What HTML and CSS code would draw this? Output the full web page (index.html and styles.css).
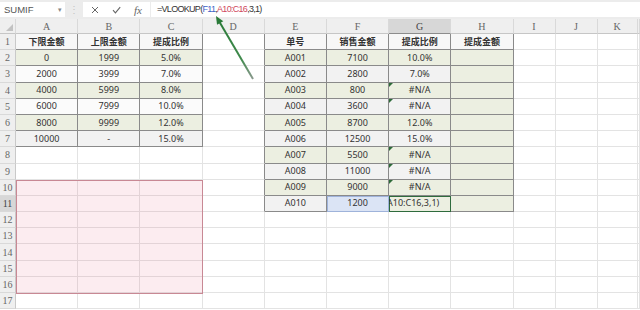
FILE: index.html
```html
<!DOCTYPE html>
<html>
<head>
    <title>VLOOKUP 提成比例</title>
    <link rel="stylesheet" href="styles.css">
</head>
<body>
    <div class="formula-bar">
        <div class="name-box">SUMIF<span class="caret">▾</span></div>
        <div class="grip">⋮</div>
        <div class="buttons">
            <svg width="8" height="8" viewBox="0 0 8 8"><path d="M1 1L7 7M7 1L1 7" stroke="#666" stroke-width="1" fill="none"/></svg>
            <svg width="9" height="8" viewBox="0 0 9 8"><path d="M1 4.2L3.4 6.8L8.2 1.2" stroke="#666" stroke-width="1.1" fill="none"/></svg>
            <span class="fx">fx</span>
        </div>
        <div class="formula">=VLOOKUP(<span class="ref-blue">F11</span>,<span class="ref-red">A10:C16</span>,3,1)</div>
    </div>

    <div class="sheet-wrap">
        <table class="sheet">
            <colgroup>
                <col class="c-rh">
                <col class="c-w"><col class="c-w"><col class="c-w"><col class="c-w">
                <col class="c-w"><col class="c-w"><col class="c-w"><col class="c-w">
                <col class="c-n"><col class="c-n"><col class="c-k"><col class="c-l">
            </colgroup>
            <tr class="heads">
                <th class="corner"><span class="tri"></span></th>
                <th>A</th><th>B</th><th>C</th><th>D</th><th>E</th><th>F</th>
                <th class="sel">G</th><th>H</th><th>I</th><th>J</th><th>K</th><th></th>
            </tr>
            <tr>
                <th>1</th>
                <td class="t hd">下限金额</td><td class="t hd">上限金额</td><td class="t hd">提成比例</td>
                <td class="edge"></td>
                <td class="t hd">单号</td><td class="t hd">销售金额</td><td class="t hd">提成比例</td><td class="t hd">提成金额</td>
                <td></td><td></td><td></td><td></td>
            </tr>
            <tr>
                <th>2</th>
                <td class="t g">0</td><td class="t g">1999</td><td class="t g">5.0%</td>
                <td class="edge"></td>
                <td class="t g">A001</td><td class="t g">7100</td><td class="t g">10.0%</td><td class="t g"></td>
                <td></td><td></td><td></td><td></td>
            </tr>
            <tr>
                <th>3</th>
                <td class="t w">2000</td><td class="t w">3999</td><td class="t w">7.0%</td>
                <td class="edge"></td>
                <td class="t s">A002</td><td class="t s">2800</td><td class="t s">7.0%</td><td class="t g"></td>
                <td></td><td></td><td></td><td></td>
            </tr>
            <tr>
                <th>4</th>
                <td class="t g">4000</td><td class="t g">5999</td><td class="t g">8.0%</td>
                <td class="edge"></td>
                <td class="t g">A003</td><td class="t g">800</td><td class="t g err">#N/A</td><td class="t g"></td>
                <td></td><td></td><td></td><td></td>
            </tr>
            <tr>
                <th>5</th>
                <td class="t w">6000</td><td class="t w">7999</td><td class="t w">10.0%</td>
                <td class="edge"></td>
                <td class="t s">A004</td><td class="t s">3600</td><td class="t s err">#N/A</td><td class="t g"></td>
                <td></td><td></td><td></td><td></td>
            </tr>
            <tr>
                <th>6</th>
                <td class="t g">8000</td><td class="t g">9999</td><td class="t g">12.0%</td>
                <td class="edge"></td>
                <td class="t g">A005</td><td class="t g">8700</td><td class="t g">12.0%</td><td class="t g"></td>
                <td></td><td></td><td></td><td></td>
            </tr>
            <tr>
                <th>7</th>
                <td class="t s">10000</td><td class="t s">-</td><td class="t s">15.0%</td>
                <td class="edge"></td>
                <td class="t s">A006</td><td class="t s">12500</td><td class="t s">15.0%</td><td class="t g"></td>
                <td></td><td></td><td></td><td></td>
            </tr>
            <tr>
                <th>8</th>
                <td></td><td></td><td></td>
                <td class="edge"></td>
                <td class="t g">A007</td><td class="t g">5500</td><td class="t g err">#N/A</td><td class="t g"></td>
                <td></td><td></td><td></td><td></td>
            </tr>
            <tr>
                <th>9</th>
                <td></td><td></td><td></td>
                <td class="edge"></td>
                <td class="t s">A008</td><td class="t s">11000</td><td class="t s err">#N/A</td><td class="t g"></td>
                <td></td><td></td><td></td><td></td>
            </tr>
            <tr>
                <th>10</th>
                <td></td><td></td><td></td>
                <td class="edge"></td>
                <td class="t g">A009</td><td class="t g">9000</td><td class="t g err">#N/A</td><td class="t g"></td>
                <td></td><td></td><td></td><td></td>
            </tr>
            <tr>
                <th class="sel">11</th>
                <td></td><td></td><td></td>
                <td class="edge"></td>
                <td class="t s">A010</td><td class="t picked">1200</td>
                <td class="t g editing"><div class="edit-text"><span>A10:C16,3,1)</span></div></td><td class="t g"></td>
                <td></td><td></td><td></td><td></td>
            </tr>
            <tr><th>12</th><td></td><td></td><td></td><td></td><td></td><td></td><td></td><td></td><td></td><td></td><td></td><td></td></tr>
            <tr><th>13</th><td></td><td></td><td></td><td></td><td></td><td></td><td></td><td></td><td></td><td></td><td></td><td></td></tr>
            <tr><th>14</th><td></td><td></td><td></td><td></td><td></td><td></td><td></td><td></td><td></td><td></td><td></td><td></td></tr>
            <tr><th>15</th><td></td><td></td><td></td><td></td><td></td><td></td><td></td><td></td><td></td><td></td><td></td><td></td></tr>
            <tr><th>16</th><td></td><td></td><td></td><td></td><td></td><td></td><td></td><td></td><td></td><td></td><td></td><td></td></tr>
            <tr><th>17</th><td></td><td></td><td></td><td></td><td></td><td></td><td></td><td></td><td></td><td></td><td></td><td></td></tr>
        </table>
        <!-- range A10:C16 referenced by the formula -->
        <div class="range-red"></div>
    </div>

    <svg class="arrow" width="640" height="310" viewBox="0 0 640 310">
        <defs>
            <linearGradient id="fade" x1="253" y1="79" x2="218" y2="20" gradientUnits="userSpaceOnUse">
                <stop offset="0" stop-color="#8c9a8f"/>
                <stop offset="0.35" stop-color="#3f8a4c"/>
                <stop offset="1" stop-color="#2a7a38"/>
            </linearGradient>
        </defs>
        <line x1="253" y1="79" x2="219.5" y2="22" stroke="url(#fade)" stroke-width="2"/>
        <polygon points="216,16 223.3,21.3 217,24.8" fill="#2a7a38"/>
    </svg>
</body>
</html>
```

FILE: styles.css
```css
body {
    margin: 0;
    width: 640px;
    height: 310px;
    overflow: hidden;
    position: relative;
    background-color: #fff;
    font-family: "Noto Sans", "Noto Sans CJK SC", sans-serif;
    color: #333;
}

/* formula bar */
.formula-bar {
    display: flex;
    height: 19px;
    padding: 2px 0;
    box-sizing: border-box;
    background-color: #ececec;
}
.name-box {
    width: 65px;
    display: flex;
    align-items: center;
    padding-left: 4px;
    box-sizing: border-box;
    background-color: #fff;
    font-family: "Liberation Sans", sans-serif;
    font-size: 9.5px;
    color: #555;
}
.caret {
    margin-left: auto;
    margin-right: 3px;
    font-size: 7px;
    color: #888;
}
.grip {
    width: 18px;
    text-align: center;
    font-size: 10px;
    line-height: 15px;
    color: #c4c4c4;
}
.buttons {
    width: 67px;
    display: flex;
    align-items: center;
    gap: 13px;
    padding-left: 8px;
    box-sizing: border-box;
    background-color: #fff;
}
.fx {
    font-family: "Liberation Serif", serif;
    font-style: italic;
    font-size: 11px;
    color: #666;
}
.formula {
    flex: 1;
    margin-left: 1px;
    padding-left: 6px;
    background-color: #fff;
    font-family: "Liberation Sans", sans-serif;
    font-size: 9px;
    letter-spacing: -0.7px;
    line-height: 15px;
    color: #333;
}
.ref-blue {
    color: #3b63c6;
}
.ref-red {
    color: #d0485c;
}

/* grid */
.sheet-wrap {
    position: relative;
    width: 640px;
    overflow: hidden;
}
.sheet {
    table-layout: fixed;
    border-collapse: separate;
    border-spacing: 0;
    width: 640px;
}
.c-rh { width: 16px; }
.c-w { width: 62.2px; }
.c-n { width: 42px; }
.c-k { width: 40px; }
.c-l { width: 2.4px; }

.sheet tr {
    height: 16.2px;
}
.sheet tr.heads {
    height: 15px;
}
.sheet th,
.sheet td {
    padding: 0;
    box-sizing: border-box;
    overflow: hidden;
    white-space: nowrap;
}
.sheet td {
    border-right: 1px solid #e3e3e3;
    border-bottom: 1px solid #e3e3e3;
    font-size: 9px;
    line-height: 14px;
    text-align: center;
    color: #333;
}
.sheet th {
    font-family: "Liberation Serif", serif;
    font-weight: normal;
    font-size: 10px;
    color: #666;
    background-color: #efefef;
    border-right: 1px solid #c9c9c9;
    border-bottom: 1px solid #d9d9d9;
    text-align: center;
}
.heads th {
    border-right-color: #d9d9d9;
    border-bottom-color: #c6c6c6;
    line-height: 13px;
}
.sheet th.sel {
    background-color: #d7d7d7;
    color: #444;
}
.heads th.sel {
    border-bottom-color: #8c8c8c;
}
.corner {
    position: relative;
}
.tri {
    position: absolute;
    right: 2px;
    bottom: 2px;
    border-bottom: 7px solid #c2c2c2;
    border-left: 7px solid transparent;
}

/* formatted tables */
.sheet td.t {
    border-right-color: #8a8a8a;
    border-bottom-color: #8a8a8a;
}
.sheet td.edge {
    border-right-color: #8a8a8a;
}
.hd {
    font-family: "Noto Sans CJK SC", sans-serif;
    font-weight: 700;
    background-color: #f7f7f7;
}
.g {
    background-color: #ecefe1;
}
.w {
    background-color: #fbfbfb;
}
.s {
    background-color: #f2f2f2;
}
.err {
    position: relative;
}
.err::before {
    content: "";
    position: absolute;
    left: 0;
    top: 0;
    border-top: 4px solid #2d6a39;
    border-right: 4px solid transparent;
}
.picked {
    background-color: #dbe4f5;
    outline: 1px solid #9fb3da;
    outline-offset: -1px;
}
.editing {
    text-align: left;
    outline: 1px solid #2f6b3d;
    outline-offset: -1px;
}
.edit-text {
    width: 62px;
    overflow: hidden;
}
.edit-text span {
    position: relative;
    left: -7px;
}

.range-red {
    position: absolute;
    left: 16px;
    top: 160.8px;
    width: 186.6px;
    height: 113.8px;
    box-sizing: border-box;
    background-color: rgba(235, 110, 140, 0.13);
    border: 1px solid #c88894;
}

.arrow {
    position: absolute;
    left: 0;
    top: 0;
    pointer-events: none;
}
```
